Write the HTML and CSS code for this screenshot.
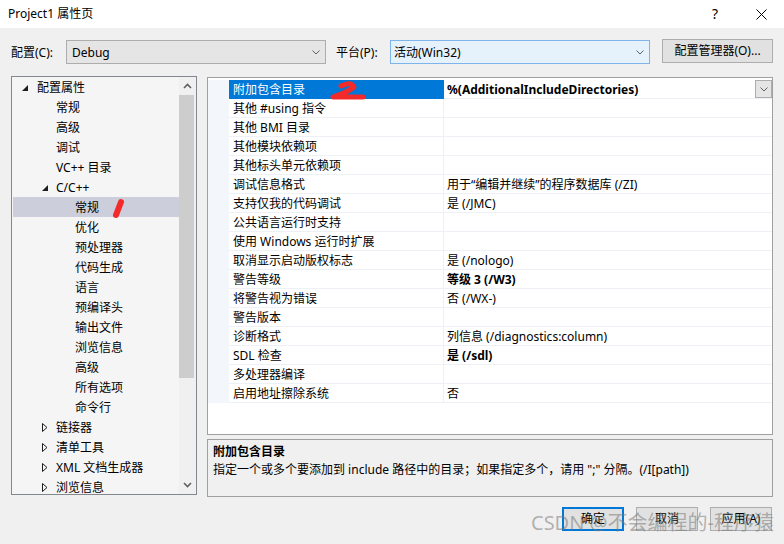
FILE: index.html
```html
<!DOCTYPE html>
<html lang="zh-CN">
<head>
<meta charset="utf-8">
<title>Project1 属性页</title>
<link rel="stylesheet" href="styles.css">
</head>
<body>
<div class="title">
  <span class="title-text">Project1 属性页</span>
  <span class="help">?</span>
  <span class="close"><svg width="11" height="11" viewBox="0 0 11 11"><path d="M0.5 0.5 L10.5 10.5 M10.5 0.5 L0.5 10.5" stroke="#000" stroke-width="1" fill="none"/></svg></span>
</div>

<div class="toolbar">
  <span class="lbl lbl-cfg">配置(C):</span>
  <div class="combo"><span>Debug</span><svg class="chev" width="8" height="5" viewBox="0 0 8 5"><path d="M0.5 0.5 L4 4 L7.5 0.5" stroke="#606060" fill="none" stroke-width="1"/></svg></div>
  <span class="lbl lbl-plat">平台(P):</span>
  <div class="combo combo-focus"><span>活动(Win32)</span><svg class="chev" width="8" height="5" viewBox="0 0 8 5"><path d="M0.5 0.5 L4 4 L7.5 0.5" stroke="#606060" fill="none" stroke-width="1"/></svg></div>
  <button class="btn btn-cfgmgr">配置管理器(O)...</button>
</div>

<div class="main">
  <div class="tree">
    <ul class="tree-list">
      <li class="tree-item l1"><span class="arrow"><svg width="6" height="6" viewBox="0 0 6 6"><polygon points="6,0 6,6 0,6" fill="#1e1e1e"/></svg></span>配置属性</li>
      <li class="tree-item l2">常规</li>
      <li class="tree-item l2">高级</li>
      <li class="tree-item l2">调试</li>
      <li class="tree-item l2">VC++ 目录</li>
      <li class="tree-item l2a"><span class="arrow"><svg width="6" height="6" viewBox="0 0 6 6"><polygon points="6,0 6,6 0,6" fill="#1e1e1e"/></svg></span>C/C++</li>
      <li class="tree-item l3 selected">常规</li>
      <li class="tree-item l3">优化</li>
      <li class="tree-item l3">预处理器</li>
      <li class="tree-item l3">代码生成</li>
      <li class="tree-item l3">语言</li>
      <li class="tree-item l3">预编译头</li>
      <li class="tree-item l3">输出文件</li>
      <li class="tree-item l3">浏览信息</li>
      <li class="tree-item l3">高级</li>
      <li class="tree-item l3">所有选项</li>
      <li class="tree-item l3">命令行</li>
      <li class="tree-item l2a"><span class="arrow"><svg width="6" height="9" viewBox="0 0 6 9"><polygon points="0.5,0.5 5,4.5 0.5,8.5" fill="none" stroke="#1e1e1e" stroke-width="1"/></svg></span>链接器</li>
      <li class="tree-item l2a"><span class="arrow"><svg width="6" height="9" viewBox="0 0 6 9"><polygon points="0.5,0.5 5,4.5 0.5,8.5" fill="none" stroke="#1e1e1e" stroke-width="1"/></svg></span>清单工具</li>
      <li class="tree-item l2a"><span class="arrow"><svg width="6" height="9" viewBox="0 0 6 9"><polygon points="0.5,0.5 5,4.5 0.5,8.5" fill="none" stroke="#1e1e1e" stroke-width="1"/></svg></span>XML 文档生成器</li>
      <li class="tree-item l2a"><span class="arrow"><svg width="6" height="9" viewBox="0 0 6 9"><polygon points="0.5,0.5 5,4.5 0.5,8.5" fill="none" stroke="#1e1e1e" stroke-width="1"/></svg></span>浏览信息</li>
    </ul>
    <div class="vscroll">
      <div class="sb-btn"><svg width="9" height="6" viewBox="0 0 9 6"><path d="M1 5 L4.5 1.5 L8 5" stroke="#606060" stroke-width="1.6" fill="none"/></svg></div>
      <div class="sb-thumb"></div>
      <div class="sb-space"></div>
      <div class="sb-btn"><svg width="9" height="6" viewBox="0 0 9 6"><path d="M1 1 L4.5 4.5 L8 1" stroke="#606060" stroke-width="1.6" fill="none"/></svg></div>
    </div>
  </div>

  <div class="right">
    <div class="grid">
      <div class="row sel"><span class="gm"></span><span class="name">附加包含目录</span><span class="val b">%(AdditionalIncludeDirectories)<span class="dd"><svg width="8" height="5" viewBox="0 0 8 5"><path d="M0.5 0.5 L4 4 L7.5 0.5" stroke="#606060" fill="none" stroke-width="1"/></svg></span></span></div>
      <div class="row"><span class="gm"></span><span class="name">其他 #using 指令</span><span class="val"></span></div>
      <div class="row"><span class="gm"></span><span class="name">其他 BMI 目录</span><span class="val"></span></div>
      <div class="row"><span class="gm"></span><span class="name">其他模块依赖项</span><span class="val"></span></div>
      <div class="row"><span class="gm"></span><span class="name">其他标头单元依赖项</span><span class="val"></span></div>
      <div class="row"><span class="gm"></span><span class="name">调试信息格式</span><span class="val">用于“编辑并继续”的程序数据库 (/ZI)</span></div>
      <div class="row"><span class="gm"></span><span class="name">支持仅我的代码调试</span><span class="val">是 (/JMC)</span></div>
      <div class="row"><span class="gm"></span><span class="name">公共语言运行时支持</span><span class="val"></span></div>
      <div class="row"><span class="gm"></span><span class="name">使用 Windows 运行时扩展</span><span class="val"></span></div>
      <div class="row"><span class="gm"></span><span class="name">取消显示启动版权标志</span><span class="val">是 (/nologo)</span></div>
      <div class="row"><span class="gm"></span><span class="name">警告等级</span><span class="val b">等级 3 (/W3)</span></div>
      <div class="row"><span class="gm"></span><span class="name">将警告视为错误</span><span class="val">否 (/WX-)</span></div>
      <div class="row"><span class="gm"></span><span class="name">警告版本</span><span class="val"></span></div>
      <div class="row"><span class="gm"></span><span class="name">诊断格式</span><span class="val">列信息 (/diagnostics:column)</span></div>
      <div class="row"><span class="gm"></span><span class="name">SDL 检查</span><span class="val b">是 (/sdl)</span></div>
      <div class="row"><span class="gm"></span><span class="name">多处理器编译</span><span class="val"></span></div>
      <div class="row"><span class="gm"></span><span class="name">启用地址擦除系统</span><span class="val">否</span></div>
    </div>
    <div class="desc">
      <div class="desc-title">附加包含目录</div>
      <div class="desc-text">指定一个或多个要添加到 include 路径中的目录；如果指定多个，请用 ";" 分隔。(/I[path])</div>
    </div>
  </div>
</div>

<div class="footer">
  <button class="btn btn-ok">确定</button>
  <button class="btn">取消</button>
  <button class="btn">应用(A)</button>
</div>

<div class="watermark">CSDN @不会编程的-程序猿</div>

<svg class="scribbles" width="784" height="544" viewBox="0 0 784 544">
  <path d="M341 86 Q351 81 354 87 Q348 92 333 97 L363 97" stroke="#f42a2a" stroke-width="5" fill="none" stroke-linecap="round" stroke-linejoin="round"/>
  <path d="M121 202 L116 215" stroke="#f42a2a" stroke-width="6" fill="none" stroke-linecap="round"/>
</svg>
</body>
</html>
```

FILE: styles.css
```css
html, body {
  margin: 0;
  padding: 0;
}
body {
  width: 784px;
  height: 544px;
  background: #f0f0f0;
  font-family: "Noto Sans", "Noto Sans CJK SC", sans-serif;
  font-size: 12px;
  line-height: 18px;
  color: #000;
  overflow: hidden;
  position: relative;
}

/* title bar */
.title {
  height: 28px;
  background: #fff;
  display: flex;
  align-items: center;
  padding: 0 17px 0 8px;
  box-sizing: border-box;
}
.title-text {
  font-size: 12px;
}
.help {
  margin-left: auto;
  width: 8px;
  font-size: 14px;
  line-height: 16px;
}
.close {
  margin-left: 36px;
  width: 11px;
  height: 11px;
  display: flex;
}

/* toolbar */
.toolbar {
  display: flex;
  align-items: flex-start;
  margin-top: 12px;
  padding-left: 11px;
  height: 25px;
}
.lbl {
  height: 24px;
  line-height: 24px;
  padding-top: 1px;
  box-sizing: border-box;
}
.lbl-cfg {
  width: 55px;
}
.lbl-plat {
  width: 64px;
  padding-left: 10px;
}
.combo {
  width: 260px;
  height: 24px;
  box-sizing: border-box;
  border: 1px solid #adadad;
  background: #e5e5e5;
  display: flex;
  align-items: center;
  justify-content: space-between;
  padding: 1px 5px 0 5px;
}
.combo .chev {
  margin-top: -1px;
}
.combo-focus {
  border-color: #7eb4ea;
  background: #e5f1fb;
  padding-left: 3px;
}
.btn {
  font: inherit;
  line-height: 18px;
  background: #e1e1e1;
  border: 1px solid #adadad;
  padding: 0;
  margin: 0;
  color: #000;
  box-sizing: border-box;
}
.btn-cfgmgr {
  margin-left: 12px;
  margin-top: -1px;
  width: 111px;
  height: 24px;
}

/* main area */
.main {
  display: flex;
  margin-top: 11px;
  align-items: flex-start;
}
.tree {
  margin-left: 11px;
  width: 186px;
  height: 419px;
  box-sizing: border-box;
  border: 1px solid #828790;
  background: #f5f5f5;
  display: flex;
  overflow: hidden;
}
.tree-list {
  list-style: none;
  margin: 0;
  padding: 0;
  flex: 1;
  overflow: hidden;
}
.tree-item {
  height: 20px;
  line-height: 19px;
  padding-top: 1px;
  display: flex;
  align-items: center;
  white-space: nowrap;
  box-sizing: border-box;
}
.tree-item .arrow {
  display: flex;
  align-items: center;
  flex: none;
}
.l1 {
  padding-left: 10px;
}
.l1 .arrow {
  width: 15px;
  padding-top: 1px;
}
.l2 {
  padding-left: 44px;
}
.l2a {
  padding-left: 30px;
}
.l2a .arrow {
  width: 14px;
}
.l3 {
  padding-left: 63px;
}
.selected {
  background: #cccedb;
  margin-left: 1px;
  padding-left: 62px;
}
.vscroll {
  width: 17px;
  flex: none;
  background: #f0f0f0;
  display: flex;
  flex-direction: column;
}
.sb-btn {
  height: 18px;
  display: flex;
  align-items: center;
  justify-content: center;
  flex: none;
}
.sb-thumb {
  height: 283px;
  margin-right: 2px;
  background: #cdcdcd;
  flex: none;
}
.sb-space {
  flex: 1;
}

.right {
  margin-left: 10px;
  width: 566px;
  display: flex;
  flex-direction: column;
}
.grid {
  margin-top: 1px;
  height: 358px;
  box-sizing: border-box;
  border: 1px solid #a0a0a0;
  background: #fff;
  padding-top: 2px;
}
.row {
  display: flex;
  height: 19px;
}
.gm {
  width: 21px;
  flex: none;
  background: #f3f6fb;
}
.name {
  width: 215px;
  flex: none;
  box-sizing: border-box;
  border-bottom: 1px solid #edf0f5;
  border-right: 1px solid #edf0f5;
  padding: 1px 0 0 4px;
  line-height: 17px;
  white-space: nowrap;
}
.val {
  flex: 1;
  display: flex;
  border-bottom: 1px solid #edf0f5;
  padding: 1px 0 0 3px;
  line-height: 17px;
  white-space: nowrap;
}
.b {
  font-weight: bold;
}
.sel .name {
  background: #0078d7;
  color: #fff;
  border-color: #0078d7;
}
.sel .val {
  padding-top: 0;
  line-height: 18px;
  padding-top: 1px;
}
.dd {
  margin-left: auto;
  margin-top: -1px;
  width: 17px;
  height: 18px;
  box-sizing: border-box;
  border: 1px solid #adadad;
  background: #e5e5e5;
  display: flex;
  align-items: center;
  justify-content: center;
}

.desc {
  margin-top: 4px;
  height: 58px;
  box-sizing: border-box;
  border: 1px solid #a0a0a0;
  background: #f0f0f0;
  padding: 3px 0 0 5px;
}
.desc-title {
  font-weight: bold;
}

/* footer buttons */
.footer {
  display: flex;
  justify-content: flex-end;
  gap: 12px;
  padding-right: 12px;
  margin-top: 10px;
}
.footer .btn {
  width: 62px;
  height: 24px;
}
.footer .btn-ok {
  border: 2px solid #0078d7;
}

/* overlays */
.watermark {
  position: absolute;
  left: 531px;
  top: 511px;
  font-size: 20px;
  line-height: 24px;
  color: rgba(120, 120, 120, 0.55);
  white-space: nowrap;
  pointer-events: none;
}
.scribbles {
  position: absolute;
  left: 0;
  top: 0;
  pointer-events: none;
}
```
